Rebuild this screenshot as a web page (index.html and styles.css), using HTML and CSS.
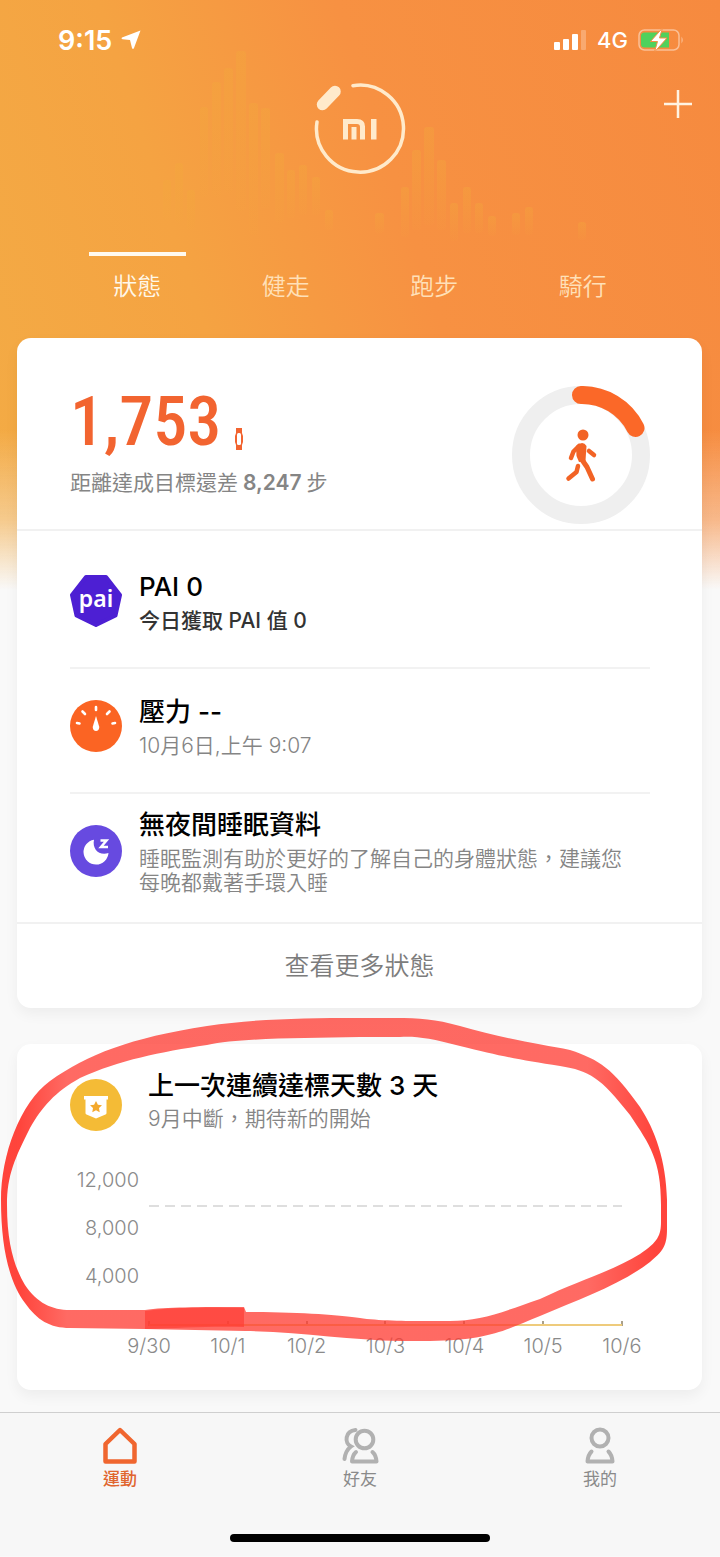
FILE: index.html
```html
<!DOCTYPE html>
<html lang="zh-Hant">
<head>
<meta charset="utf-8">
<meta name="viewport" content="width=device-width, initial-scale=1">
<title>運動</title>
<link rel="stylesheet" href="styles.css">
</head>
<body>
<header class="hero">
  <svg class="wave" viewBox="0 0 720 340" aria-hidden="true">
    <defs><linearGradient id="fade" x1="0" y1="0" x2="0" y2="1"><stop offset="0" stop-color="#f2a93b" stop-opacity=".35"/><stop offset="1" stop-color="#f2a93b" stop-opacity=".05"/></linearGradient></defs>
    <g fill="url(#fade)">
      <rect x="163" y="180" width="8" height="40" rx="3"/><rect x="175" y="163" width="8" height="60" rx="3"/><rect x="187" y="190" width="8" height="40" rx="3"/>
      <rect x="200" y="107" width="8" height="90" rx="3"/><rect x="212" y="82" width="9" height="115" rx="3"/><rect x="224" y="68" width="9" height="125" rx="3"/><rect x="236" y="51" width="10" height="160" rx="3"/><rect x="249" y="103" width="9" height="132" rx="3"/><rect x="261" y="108" width="9" height="100" rx="3"/><rect x="275" y="153" width="9" height="70" rx="3"/><rect x="287" y="170" width="8" height="48" rx="3"/><rect x="299" y="165" width="8" height="50" rx="3"/><rect x="312" y="177" width="8" height="38" rx="3"/><rect x="325" y="210" width="8" height="20" rx="3"/>
      <rect x="375" y="213" width="9" height="20" rx="3"/><rect x="401" y="187" width="8" height="50" rx="3"/><rect x="412" y="150" width="9" height="80" rx="3"/><rect x="424" y="127" width="10" height="98" rx="3"/><rect x="437" y="160" width="9" height="70" rx="3"/><rect x="450" y="203" width="8" height="38" rx="3"/><rect x="463" y="187" width="8" height="46" rx="3"/><rect x="475" y="203" width="8" height="30" rx="3"/><rect x="488" y="216" width="8" height="20" rx="3"/><rect x="512" y="213" width="8" height="22" rx="3"/><rect x="525" y="207" width="8" height="28" rx="3"/><rect x="578" y="222" width="8" height="18" rx="3"/>
    </g>
  </svg>
  <div class="status">
    <span class="time">9:15</span>
    <svg class="locate" width="20" height="20" viewBox="0 0 20 20" aria-hidden="true"><path d="M19.500 .5L1 7.500Q-.2 8.600 1.500 9.200L9 10L11 18Q12 20 13 18Z" fill="#fff"/></svg>
    <svg class="signal" width="33" height="20" viewBox="0 0 33 20" aria-hidden="true"><g fill="#fff"><rect x="0" y="12" width="6" height="8" rx="1"/><rect x="9" y="9" width="6" height="11" rx="1"/><rect x="18" y="4" width="6" height="16" rx="1"/><rect x="27" y="0" width="5" height="20" rx="1" opacity=".25"/></g></svg>
    <span class="net">4G</span>
    <svg class="battery" width="46" height="24" viewBox="0 0 46 24" aria-hidden="true"><rect x="1" y="2" width="40" height="20" rx="5.500" fill="none" stroke="#fff" stroke-opacity=".45" stroke-width="1.500"/><path d="M31 4.500H6.500Q3 4.500 3 8V16Q3 19.500 6.500 19.500H31Z" fill="#4fd15c"/><path d="M43.500 8.500Q46 12 43.500 15.500Z" fill="#fff" opacity=".45"/><path d="M24.500 0L12.500 13.500H19.500L16.500 24L29 10H21.500Z" fill="#fff" stroke="#f58f42" stroke-width="1"/></svg>
  </div>
  <div class="top">
    <svg class="logo" width="92" height="92" viewBox="0 0 92 92" role="img" aria-label="MI">
      <g fill="none" stroke="#ffeacb" stroke-linecap="round"><path d="M39 2.700A43.500 43.500 0 1 1 3 39" stroke-width="3.500"/><path d="M8.500 21.500L21 8.500" stroke-width="11.500"/></g>
      <g fill="#ffeacb"><path d="M29 36H43Q51 36 51 43.500V56.500H46V44Q46 41 43 41H34V56.500H29ZM37.500 44H42.500V56.500H37.500ZM57 36H62.500V56.500H57Z"/></g>
    </svg>
    <button class="add" type="button" aria-label="新增"><svg width="30" height="30" viewBox="0 0 30 30"><path d="M15 1V29M1 15H29" stroke="#fff3e2" stroke-width="2.500"/></svg></button>
  </div>
  <nav class="tabs">
    <a class="tab on" href="#status">狀態</a><a class="tab" href="#walk">健走</a><a class="tab" href="#run">跑步</a><a class="tab" href="#ride">騎行</a>
  </nav>
</header>
<main>
  <section class="card">
    <div class="steps">
      <div>
        <div class="count"><span>1,753</span><svg width="8" height="22" viewBox="0 0 8 22" aria-hidden="true"><path d="M1 0H7V5L8 8V14L7 17V22H1V17L0 14V8L1 5Z" fill="#f26430"/><rect x="2" y="5" width="4" height="12" rx="1.500" fill="#fff"/></svg></div>
        <p class="remain">距離達成目標還差<b>8,247</b>步</p>
      </div>
      <svg class="ring" width="138" height="138" viewBox="0 0 138 138" role="img" aria-label="步數進度">
        <circle cx="69" cy="69" r="60" fill="none" stroke="#efefef" stroke-width="18"/>
        <path d="M69 9A60 60 0 0 1 123.500 42" fill="none" stroke="#fb6828" stroke-width="18" stroke-linecap="round"/>
        <g fill="none" stroke="#f26325" stroke-linecap="round" stroke-linejoin="round"><circle cx="71" cy="49" r="5.500" fill="#f26325" stroke="none"/><path d="M64 60Q71 54 74.500 60L73.500 75L67 76L64.500 70Z" fill="#f26325" stroke="none"/><path d="M67 60L61.500 65.500L59 72" stroke-width="4.500"/><path d="M69.500 73L75 81L80.500 93" stroke-width="5"/><path d="M66 80L64.500 86L56.500 92.500" stroke-width="4.500"/><path d="M77 65L82 69" stroke-width="4.500"/></g>
      </svg>
    </div>
    <div class="rows">
      <article class="row">
        <svg class="icon" viewBox="0 0 52 52" role="img" aria-label="PAI"><path d="M16 2H36L50 20L45.500 40.500L26 50L6.500 40.500L2 20Z" fill="#4d1fd3" stroke="#4d1fd3" stroke-width="4" stroke-linejoin="round"/><text class="paitext" x="26" y="32" text-anchor="middle" fill="#fff">pai</text></svg>
        <div><h2>PAI 0</h2><p class="dark">今日獲取 PAI 值 0</p></div>
      </article>
      <article class="row">
        <svg class="icon" viewBox="0 0 52 52" aria-hidden="true"><circle cx="26" cy="26" r="26" fill="#fb6423"/><path d="M26 7V10M12.500 11.500L15 14M39.500 11.500L37 14M7 23L9.500 23.500M45 23L42.500 23.500" stroke="#fff" stroke-width="2.600" stroke-linecap="round"/><path d="M26 16L29.300 27Q29 31 26 31T22.700 27Z" fill="#fff"/></svg>
        <div><h2>壓力 --</h2><p>10月6日,上午 9:07</p></div>
      </article>
      <article class="row last">
        <svg class="icon" viewBox="0 0 52 52" aria-hidden="true"><circle cx="26" cy="26" r="26" fill="#674ae0"/><path d="M24 14.700A12.500 12.500 0 1 0 38.500 28C29 31 22 24 24 14.700Z" fill="#fff"/><path d="M30.500 15.500H36.500L31 22H38" fill="none" stroke="#fff" stroke-width="2.500"/></svg>
        <div><h2>無夜間睡眠資料</h2><p>睡眠監測有助於更好的了解自己的身體狀態，建議您<br>每晚都戴著手環入睡</p></div>
      </article>
    </div>
    <button class="more" type="button">查看更多狀態</button>
  </section>

  <section class="card streak">
    <div class="goalhead">
      <svg class="icon" viewBox="0 0 52 52" aria-hidden="true"><circle cx="26" cy="26" r="26" fill="#f4bb36"/><path d="M14 17H38V20.500H36.500V34Q36.500 35 35.500 35.500L26 39.500L16.500 35.500Q15.500 35 15.500 34V20.500H14Z" fill="#fff"/><path d="M26 22L27.900 25.700L32 26.300L29 29.100L29.700 33.200L26 31.200L22.300 33.200L23 29.100L20 26.300L24.100 25.700Z" fill="#f4a92c"/></svg>
      <div><h2>上一次連續達標天數 3 天</h2><p>9月中斷，期待新的開始</p></div>
    </div>
    <div class="chart">
      <div class="scale"><span>12,000</span><span>8,000</span><span>4,000</span></div>
      <div class="plot"><span class="goal"></span></div>
      <ol class="days"><li>9/30</li><li>10/1</li><li>10/2</li><li>10/3</li><li>10/4</li><li>10/5</li><li>10/6</li></ol>
    </div>
    <svg class="marker" viewBox="0 1018 720 326" aria-hidden="true">
      <defs><linearGradient id="ink" gradientUnits="userSpaceOnUse" x1="0" y1="0" x2="668" y2="0"><stop offset="0" stop-color="#ff3b32"/><stop offset=".03" stop-color="#ff3b32"/><stop offset=".1" stop-color="#ff3b32" stop-opacity=".8"/><stop offset=".88" stop-color="#ff3b32" stop-opacity=".8"/><stop offset=".98" stop-color="#ff3b32"/></linearGradient></defs>
      <path fill="url(#ink)" opacity=".95" fill-rule="evenodd" d="M360 1018C300 1018 255 1019 207 1026C130 1038 88 1054 50 1081C20 1103 1 1155 1 1200C1 1250 10 1283 25 1303C37 1320 50 1328 70 1328L145 1329L245 1331C300 1332 350 1340 400 1341L430 1341C490 1340 505 1330 540 1316C580 1299 620 1285 650 1262C668 1248 667 1240 667 1222V1200C666 1160 655 1130 640 1107C612 1068 600 1060 570 1050C540 1044 500 1038 460 1026C435 1019 420 1018 395 1018ZM360 1037C300 1038 240 1038 207 1045C160 1052 120 1060 80 1078C55 1092 42 1107 30 1128C15 1158 7 1175 7 1205C7 1245 15 1268 25 1285C37 1303 52 1310 70 1310H145C165 1307 200 1307 244 1307L246 1312C300 1312 340 1315 360 1318C385 1322 440 1321 450 1321C480 1321 500 1313 540 1299C580 1280 615 1270 640 1254C658 1242 661 1235 661 1222V1205C661 1160 650 1145 630 1115C600 1077 590 1071 560 1066C520 1060 500 1056 460 1046C430 1038 415 1036 400 1037Z"/>
      <path fill="#ff3b32" opacity=".65" d="M145 1311C170 1307 210 1307 244 1308V1327C210 1326 180 1328 145 1329Z"/>
    </svg>
  </section>
</main>
<footer class="bottom">
  <nav class="bar">
    <a class="item on" href="#sport"><svg width="38" height="38" viewBox="0 0 38 38" aria-hidden="true"><path d="M19 3L33.500 17V34.500H4.500V17Z" fill="none" stroke="#f0662f" stroke-width="4.500" stroke-linejoin="round"/></svg>運動</a>
    <a class="item" href="#friends"><svg width="38" height="38" viewBox="0 0 38 38" aria-hidden="true"><g fill="none" stroke="#b1b1b1" stroke-width="4" stroke-linecap="round"><circle cx="23.500" cy="12.500" r="8.800"/><path d="M15 25Q11.500 28 11 34.500H35.500Q35 28 31.500 25" stroke-linejoin="round"/><path d="M14.500 3C4 4 3 16 10 19.500Q4.500 23.500 3.500 32"/></g></svg>好友</a>
    <a class="item" href="#me"><svg width="38" height="38" viewBox="0 0 38 38" aria-hidden="true"><g fill="none" stroke="#b1b1b1" stroke-width="4" stroke-linecap="round"><circle cx="19" cy="11" r="8.500"/><path d="M10.500 24.500Q7 28 6.500 34.500H31.500Q31 28 27.500 24.500" stroke-linejoin="round"/></g></svg>我的</a>
  </nav>
  <div class="home"></div>
</footer>
</body>
</html>
```
FILE: styles.css
```css
* { box-sizing: border-box; }
body {
  margin: 0;
  font-family: Inter, "Noto Sans CJK TC", sans-serif;
  color: #000;
  background:
    linear-gradient(to bottom, rgba(249,249,249,0) 430px, rgba(249,249,249,.4) 520px, #f9f9f9 590px),
    linear-gradient(72deg, #f3ac45 0, #f5a342 32%, #f79142 58%, #f68a3f 100%) 0 0 / 100% 600px no-repeat,
    #f9f9f9;
}
h2, p, ol { margin: 0; padding: 0; }
a { color: inherit; text-decoration: none; }
button { border: 0; background: none; padding: 0; font: inherit; cursor: pointer; }
svg { display: block; flex: none; }

.hero { position: relative; padding-bottom: 32px; }
.wave { position: absolute; left: 0; top: 0; width: 100%; }
.status { display: flex; align-items: center; height: 80px; padding: 0 36px 0 58px; color: #fff; position: relative; }
.time { font-size: 27px; font-weight: 600; }
.locate { margin-left: 9px; }
.signal { margin-left: auto; }
.net { font-size: 22px; font-weight: 500; margin: 0 10px; }
.top { position: relative; display: grid; grid-template-columns: 1fr auto 1fr; padding: 3px 27px 0; }
.logo { grid-column: 2; }
.add { justify-self: end; align-self: start; margin-top: 6px; }
.tabs { position: relative; display: grid; grid-template-columns: repeat(4, 1fr); margin-top: 77px; padding: 0 63px; }
.tab { display: flex; flex-direction: column; align-items: center; gap: 12px; font-size: 24px; line-height: 38px; font-weight: 350; color: #ffe0b8; }
.tab::before { content: ""; width: 97px; height: 4px; }
.tab.on { color: #fff8ea; }
.tab.on::before { background: #fffaf0; }

main { padding: 0 18px 0 17px; display: grid; gap: 36px; }
.card { background: #fff; border-radius: 14px; box-shadow: 0 6px 14px rgba(0,0,0,.05); position: relative; min-width: 0; }
.steps { display: flex; justify-content: space-between; align-items: flex-start; padding: 46px 52px 5px 53px; border-bottom: 2px solid #f1f1f1; }
.count { display: flex; align-items: flex-end; gap: 14px; height: 72px; padding-bottom: 6px; color: #f26430; }
.count span { font: 500 68px/56px "Roboto Condensed", Roboto, sans-serif; }
.remain { margin-top: 13px; font-size: 21px; line-height: 28px; color: #858585; }
.remain b { font-weight: 600; margin: 0 5px; }
.ring { margin-top: 2px; }
.rows { padding: 13px 52px 0 53px; }
.row { display: flex; align-items: center; gap: 17px; min-height: 125px; padding-bottom: 9px; border-bottom: 2px solid #f2f2f2; }
.row.last { min-height: 128px; padding-bottom: 15px; border-bottom: 0; }
.icon { width: 52px; height: 52px; }
.paitext { font: 600 23px "Noto Sans", sans-serif; }
h2 { font-size: 26px; line-height: 36px; font-weight: 500; }
.row p, .goalhead p { margin-top: 4px; font-size: 21px; line-height: 24px; font-weight: 350; color: #858585; }
.row p.dark { color: #333; font-weight: 500; }
.more { display: block; width: 100%; height: 86px; padding-bottom: 4px; border-top: 2px solid #f1f1f1; font-size: 25px; font-weight: 350; color: #7c7c7c; }

.streak { padding: 24px 52px 32px 53px; }
.goalhead { display: flex; align-items: flex-end; gap: 26px; }
.goalhead p { margin-top: 3px; }
.chart { display: grid; grid-template-columns: 69px 1fr; column-gap: 10px; padding-right: 28px; margin-top: 25px; font-size: 20px; font-weight: 350; color: #8a8a8a; }
.scale { display: grid; grid-auto-rows: 48px; align-items: center; justify-items: end; padding-bottom: 26px; }
.plot { position: relative; border-bottom: 2px solid #eecb7c; }
.goal { position: absolute; left: 0; right: 0; top: 49px; height: 2px; background: repeating-linear-gradient(to right, #dedede 0 10px, transparent 10px 16px); }
.days { grid-column: 2; display: flex; justify-content: space-between; list-style: none; line-height: 24px; }
.days li { width: 0; display: flex; flex-direction: column; align-items: center; gap: 8px; margin-top: -5px; white-space: nowrap; }
.days li::before { content: ""; width: 2px; height: 5px; background: #aaa08a; }
.marker { position: absolute; left: -17px; top: -26px; width: calc(100% + 35px); pointer-events: none; }

.bottom { margin-top: 22px; padding: 14px 0; background: #f7f7f7; border-top: 1px solid #cfcfcf; }
.bar { display: grid; grid-template-columns: repeat(3, 1fr); }
.item { display: flex; flex-direction: column; align-items: center; gap: 2px; font-size: 17px; line-height: 24px; color: #8a8a8a; }
.item.on { color: #e0652f; font-weight: 500; }
.home { width: 36%; height: 8px; margin: 43px auto 0; border-radius: 4px; background: #000; }
```
